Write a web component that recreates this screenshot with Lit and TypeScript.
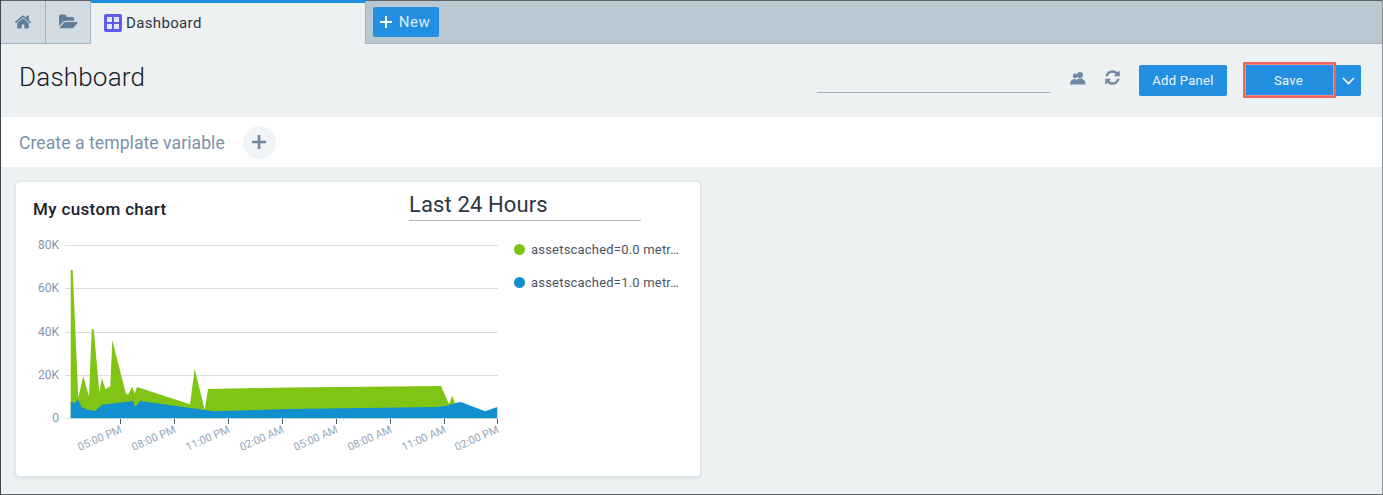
import { LitElement, css, html, svg } from 'lit';
import { customElement } from 'lit/decorators.js';

const HOME = 'M1472 992v480q0 26-19 45t-45 19h-384v-384h-256v384h-384q-26 0-45-19t-19-45v-480q0-1 .5-3t.5-3l575-474 575 474q1 2 1 6zm223-69l-62 74q-8 9-21 11h-3q-13 0-21-7l-692-577-692 577q-12 8-24 7-13-2-21-11l-62-74q-8-10-7-23.500t11-21.500l719-599q32-26 76-26t76 26l244 204v-195q0-14 9-23t23-9h192q14 0 23 9t9 23v408l219 182q10 8 11 21.500t-7 23.500z';
const FOLDER = 'M1879 952q0 31-31 66l-336 396q-43 51-120.500 86.500t-143.500 35.500h-1088q-34 0-60.500-13t-26.500-43q0-31 31-66l336-396q43-51 120.500-86.500t143.500-35.500h1088q34 0 60.500 13t26.500 43zm-343-344v160h-832q-94 0-197 47.500t-164 119.500l-337 396-5 6q0-4-.500-12.500t-.500-12.500v-960q0-92 66-158t158-66h320q92 0 158 66t66 158v32h544q92 0 158 66t66 158z';
const REFRESH = 'M1639 1056q0 5-1 7-64 268-268 434.500t-478 166.500q-146 0-282.500-55t-243.500-157l-129 129q-19 19-45 19t-45-19-19-45v-448q0-26 19-45t45-19h448q26 0 45 19t19 45-19 45l-137 137q71 66 161 102t187 36q134 0 250-65t186-179q11-17 53-117 8-23 30-23h192q13 0 22.500 9.500t9.500 22.500zm25-800v448q0 26-19 45t-45 19h-448q-26 0-45-19t-19-45 19-45l138-138q-148-137-349-137-134 0-250 65t-186 179q-11 17-53 117-8 23-30 23h-199q-13 0-22.500-9.500t-9.500-22.500v-7q65-268 270-434.500t480-166.500q146 0 284 55.500t245 156.500l130-129q19-19 45-19t45 19 19 45z';

// chart points are in page pixels, the svg viewBox starts at the plot's page offset
const GREEN = '70.7,418 70.7,270 72.7,270 78.3,398 83.3,376 89,396.7 91.7,329.3 93.7,329.3 99.3,391.7 102,378.3 105.3,389.3 109.3,386.7 110.3,386.7 112.3,340 126,394.3 128.3,394.3 132,386.7 134.7,393.3 137,387 190,404.3 194.7,369 204.7,410 208,389 290,387.5 441,386 449,404.3 452.3,395.7 455,403.3 455,418';
const BLUE = '70.7,418 70.7,401.7 72.7,401.7 74.7,403.7 77.7,399.3 82,407.7 84.7,407.7 86.7,410 92.3,410 95,411.3 101.7,404.7 133.3,401 135,407 140.3,401 204.7,410 213.3,411.3 290,409 436.7,407 446.7,405.7 458.3,402.3 461.7,402.3 485,411.3 497.3,407 497.3,418';
const GRID = [245.5, 288.5, 332.5, 375.5];
const YLABELS: [string, number][] = [['80K', 244], ['60K', 287], ['40K', 331], ['20K', 374], ['0', 417]];
const XLABELS: [string, number][] = [
  ['05:00 PM', 120.5], ['08:00 PM', 174.5], ['11:00 PM', 228.5], ['02:00 AM', 282.5],
  ['05:00 AM', 336.5], ['08:00 AM', 390.5], ['11:00 AM', 444.5], ['02:00 PM', 497.5],
];
const LEGEND = [
  { color: '#80c414', label: 'assetscached=0.0 metr…' },
  { color: '#118fcf', label: 'assetscached=1.0 metr…' },
];

@customElement('app-root')
export class AppRoot extends LitElement {
  static styles = css`
    :host {
      display: block;
      font-family: Roboto, "Liberation Sans", sans-serif;
    }
    .page {
      box-sizing: border-box;
      height: 495px;
      display: flex;
      flex-direction: column;
      background: #edf1f2;
      border-left: 1px solid #3c4650;
      border-right: 1px solid #8b9196;
      border-bottom: 1px solid #5b6166;
    }
    .tabbar {
      box-sizing: border-box;
      height: 44px;
      display: flex;
      background: #b9c7d0;
      border-top: 1px solid #5f6468;
      border-bottom: 1px solid #a3b4c2;
    }
    .tab-icon {
      box-sizing: border-box;
      width: 45px;
      height: 43px;
      margin-bottom: -1px;
      display: flex;
      align-items: center;
      justify-content: center;
      background: #d3dbe2;
      border-right: 1px solid #a3b4c2;
      border-bottom: 1px solid #a3b4c2;
    }
    .tab-icon svg { fill: #5f7d9b; }
    .tab-active {
      box-sizing: border-box;
      width: 275px;
      height: 44px;
      margin-top: -1px;
      margin-bottom: -1px;
      padding: 0 0 2px 13px;
      display: flex;
      align-items: center;
      gap: 4px;
      background: #edf1f2;
      border-top: 3px solid #1d8fe0;
      border-right: 1px solid #a3b4c2;
      font-size: 15px;
      color: #2e3642;
      letter-spacing: 0.35px;
    }
    .new {
      box-sizing: border-box;
      margin: 6px 0 0 7px;
      width: 66px;
      height: 30px;
      padding-right: 2px;
      display: flex;
      align-items: center;
      justify-content: center;
      gap: 7px;
      background: #238fe0;
      border-radius: 2px;
      color: #dcecf9;
      font-size: 15px;
      letter-spacing: 0.5px;
    }
    .header {
      height: 73px;
      display: flex;
      align-items: flex-start;
      padding-left: 18px;
    }
    h1 {
      margin: 15px 0 0;
      font-size: 26px;
      line-height: 36px;
      font-weight: 300;
      color: #161e28;
      letter-spacing: 0.2px;
    }
    .actions {
      margin-left: auto;
      display: flex;
      align-items: flex-start;
      padding-right: 21px;
    }
    .search {
      width: 234px;
      height: 48px;
      border-bottom: 1px solid #a3b4c2;
      margin-right: 19px;
    }
    .icon-btn {
      display: flex;
      align-items: center;
      justify-content: center;
      margin-top: 25px;
      height: 18px;
    }
    .icon-btn svg { fill: #6f88a3; }
    .refresh { margin: 24px 0 0 18px; }
    .btn {
      display: flex;
      align-items: center;
      justify-content: center;
      box-sizing: border-box;
      background: #238fe0;
      color: #f0f7fd;
      font-size: 13px;
      letter-spacing: 0.3px;
      border-radius: 2px;
    }
    .add { width: 88px; height: 31px; margin: 21px 16px 0 18px; }
    .save {
      width: 93px;
      height: 36px;
      margin-top: 18px;
      padding-right: 2px;
      border: 2px solid #f4645a;
      border-radius: 0;
      outline: 1px solid #f88a82;
      outline-offset: -3px;
    }
    .caret { width: 25px; height: 31px; margin-top: 21px; border-radius: 0 2px 2px 0; }
    .template {
      height: 50px;
      display: flex;
      align-items: center;
      padding-left: 18px;
      background: #fff;
      color: #7a91aa;
      font-size: 17.6px;
      letter-spacing: 0.05px;
    }
    .template-label { margin-top: 2px; }
    .circle {
      width: 33px;
      height: 33px;
      margin-left: 18px;
      border-radius: 50%;
      background: #f0f4f7;
      display: flex;
      align-items: center;
      justify-content: center;
    }
    .card {
      box-sizing: border-box;
      width: 686px;
      height: 296px;
      margin: 14px 0 0 14px;
      background: #fff;
      border: 1px solid #dde4ea;
      border-radius: 4px;
      box-shadow: 0 1px 3px rgba(90, 110, 130, 0.18);
    }
    .card-head {
      height: 50px;
      display: flex;
      padding-left: 17px;
    }
    h2 {
      margin: 17px 0 0;
      font-size: 17px;
      line-height: 20px;
      font-weight: 500;
      color: #1a222d;
      letter-spacing: 0.35px;
      width: 376px;
    }
    .range {
      box-sizing: border-box;
      width: 232px;
      height: 39px;
      padding-top: 9px;
      font-size: 22px;
      line-height: 28px;
      color: #2c3644;
      letter-spacing: 0.12px;
      border-bottom: 1px solid #a9b8c6;
    }
    .card-body { display: flex; }
    .chart { display: block; flex: none; }
    .grid { stroke: #d6dee6; stroke-width: 1; }
    .axis { stroke: #b4d4dc; stroke-width: 1; }
    .tick { stroke: #4d5a68; stroke-width: 1; }
    .ylabel { font-size: 12px; fill: #8496ad; text-anchor: end; }
    .xlabel { font-size: 11px; fill: #93a5ba; text-anchor: end; }
    .legend {
      margin: 8px 0 0 10px;
      display: flex;
      flex-direction: column;
      gap: 15px;
    }
    .legend-item {
      display: flex;
      align-items: center;
      gap: 6px;
      height: 18px;
    }
    .dot { width: 11px; height: 11px; border-radius: 50%; flex: none; }
    .legend-label {
      white-space: nowrap;
      font-size: 13px;
      color: #4a5562;
      letter-spacing: 0.2px;
    }
  `;

  renderChart() {
    return html`<svg class="chart" width="488" height="231" viewBox="16 232 488 231">
      ${GRID.map((y) => svg`<line class="grid" x1="65" x2="498" y1=${y} y2=${y}></line>`)}
      <line class="grid" x1="65" x2="71" y1="418.5" y2="418.5"></line>
      ${YLABELS.map(([t, y]) => svg`<text class="ylabel" x="59" y=${y + 4.5}>${t}</text>`)}
      <polygon points=${GREEN} fill="#80c414"></polygon>
      <polygon points=${BLUE} fill="#118fcf"></polygon>
      <line class="axis" x1="71" x2="498" y1="418.5" y2="418.5"></line>
      ${XLABELS.map(([t, x]) => svg`
        <line class="tick" x1=${x} x2=${x} y1="419" y2="424"></line>
        <text class="xlabel" transform="translate(${x + 2} 432) rotate(-24)">${t}</text>`)}
    </svg>`;
  }

  render() {
    return html`
      <div class="page">
        <div class="tabbar">
          <div class="tab-icon">
            <svg width="18" height="18" viewBox="0 0 1792 1792"><path d=${HOME}></path></svg>
          </div>
          <div class="tab-icon">
            <svg width="19" height="18" viewBox="0 0 1920 1792"><path d=${FOLDER}></path></svg>
          </div>
          <div class="tab-active">
            <svg width="18" height="18" viewBox="0 0 18 18">
              <rect width="18" height="18" rx="2" fill="#5a5ee8"></rect>
              <rect x="3" y="3" width="5" height="5" fill="#e4e6fb"></rect>
              <rect x="3" y="10" width="5" height="5" fill="#e4e6fb"></rect>
              <rect x="10" y="3" width="5" height="5" fill="#e4e6fb"></rect>
              <rect x="10" y="10" width="5" height="5" fill="#e4e6fb"></rect>
            </svg>
            Dashboard
          </div>
          <div class="new">
            <svg width="12" height="12" viewBox="0 0 12 12">
              <path d="M6 0v12M0 6h12" stroke="#fff" stroke-width="2"></path>
            </svg>
            New
          </div>
        </div>

        <div class="header">
          <h1>Dashboard</h1>
          <div class="actions">
            <div class="search"></div>
            <div class="icon-btn">
              <svg width="16" height="13" viewBox="0 0 16 13">
                <circle cx="5.2" cy="4" r="2.4"></circle>
                <circle cx="10" cy="3" r="3"></circle>
                <path d="M0 12.5c0-3 1.500-5 4-5.500l2 .5L4.800 12.500zM4.500 12.500c0-3.500 2-6 5.500-6s5.500 2.500 5.500 6z"></path>
              </svg>
            </div>
            <div class="icon-btn refresh">
              <svg width="17" height="17" viewBox="0 0 1792 1792"><path d=${REFRESH}></path></svg>
            </div>
            <div class="btn add">Add Panel</div>
            <div class="btn save">Save</div>
            <div class="btn caret">
              <svg width="13" height="8" viewBox="0 0 13 8">
                <path d="M1 1l5.500 5.500L12 1" fill="none" stroke="#fff" stroke-width="1.6"></path>
              </svg>
            </div>
          </div>
        </div>

        <div class="template">
          <span class="template-label">Create a template variable</span>
          <div class="circle">
            <svg width="14" height="14" viewBox="0 0 14 14">
              <path d="M7 0v14M0 7h14" stroke="#7088a2" stroke-width="2.6"></path>
            </svg>
          </div>
        </div>

        <div class="card">
          <div class="card-head">
            <h2>My custom chart</h2>
            <div class="range">Last 24 Hours</div>
          </div>
          <div class="card-body">
            ${this.renderChart()}
            <div class="legend">
              ${LEGEND.map((l) => html`
                <div class="legend-item">
                  <span class="dot" style="background:${l.color}"></span>
                  <span class="legend-label">${l.label}</span>
                </div>`)}
            </div>
          </div>
        </div>
      </div>
    `;
  }
}
